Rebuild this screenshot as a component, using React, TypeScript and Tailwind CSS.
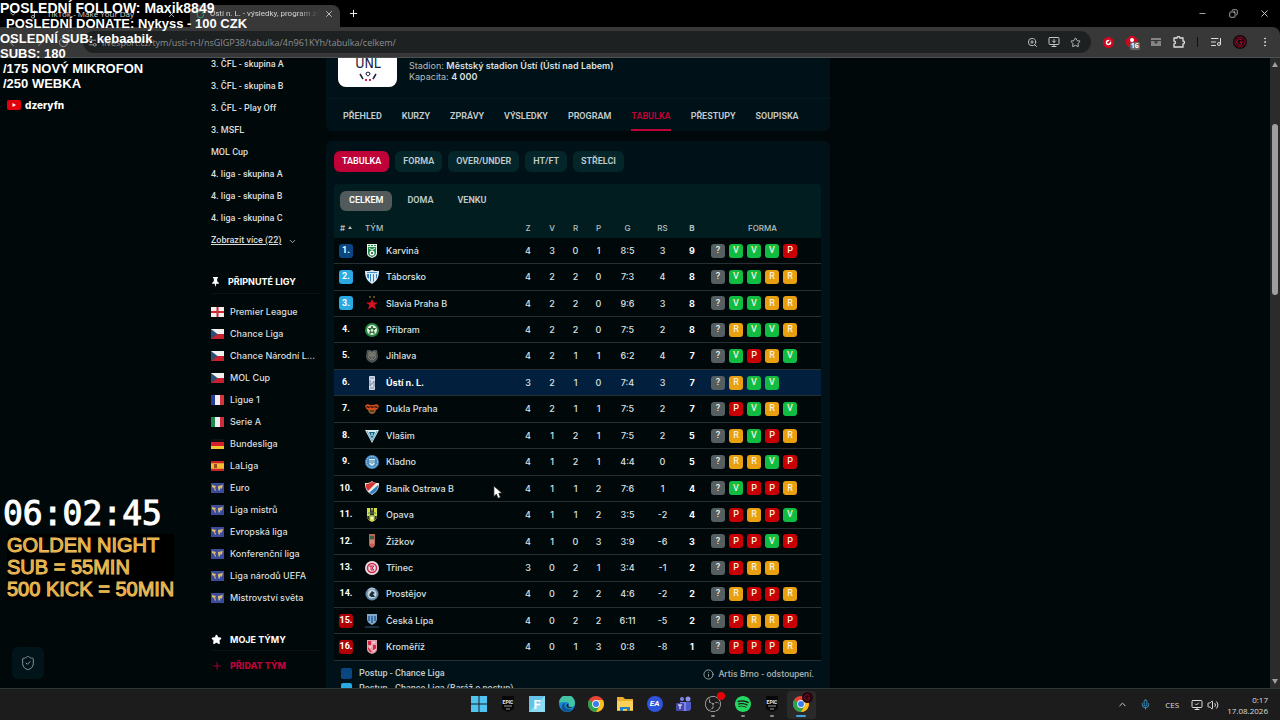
import { ReactNode } from "react";
import {
  ArrowLeft,
  ArrowRight,
  ChevronDown,
  ChevronUp,
  Copy,
  EllipsisVertical,
  Info,
  ListMusic,
  Mic,
  Minus,
  MonitorDown,
  MonitorCheck,
  Music2,
  Plus,
  RotateCw,
  Settings2,
  ShieldCheck,
  Star,
  Volume2,
  X,
  ZoomIn,
} from "lucide-react";
import { SiObsstudio, SiSpotify } from "react-icons/si";
import { clsx } from "clsx";

type FormResult = "?" | "V" | "R" | "P";

interface TeamRow {
  name: string;
  stats: string[];
  form: string;
}

const LEAGUES = [
  "3. ČFL - skupina A",
  "3. ČFL - skupina B",
  "3. ČFL - Play Off",
  "3. MSFL",
  "MOL Cup",
  "4. liga - skupina A",
  "4. liga - skupina B",
  "4. liga - skupina C",
];

const PINNED = [
  { name: "Premier League", flag: "eng" },
  { name: "Chance Liga", flag: "cze" },
  { name: "Chance Národní L...", flag: "cze" },
  { name: "MOL Cup", flag: "cze" },
  { name: "Ligue 1", flag: "fra" },
  { name: "Serie A", flag: "ita" },
  { name: "Bundesliga", flag: "ger" },
  { name: "LaLiga", flag: "esp" },
  { name: "Euro", flag: "world" },
  { name: "Liga mistrů", flag: "world" },
  { name: "Evropská liga", flag: "world" },
  { name: "Konferenční liga", flag: "world" },
  { name: "Liga národů UEFA", flag: "world" },
  { name: "Mistrovství světa", flag: "world" },
];

const NAV = [
  "PŘEHLED",
  "KURZY",
  "ZPRÁVY",
  "VÝSLEDKY",
  "PROGRAM",
  "TABULKA",
  "PŘESTUPY",
  "SOUPISKA",
];

const TABLE_TABS = ["TABULKA", "FORMA", "OVER/UNDER", "HT/FT", "STŘELCI"];

const TEAMS: TeamRow[] = [
  { name: "Karviná", stats: ["4", "3", "0", "1", "8:5", "3", "9"], form: "?VVVP" },
  { name: "Táborsko", stats: ["4", "2", "2", "0", "7:3", "4", "8"], form: "?VVRR" },
  { name: "Slavia Praha B", stats: ["4", "2", "2", "0", "9:6", "3", "8"], form: "?VVRR" },
  { name: "Příbram", stats: ["4", "2", "2", "0", "7:5", "2", "8"], form: "?RVVR" },
  { name: "Jihlava", stats: ["4", "2", "1", "1", "6:2", "4", "7"], form: "?VPRV" },
  { name: "Ústí n. L.", stats: ["3", "2", "1", "0", "7:4", "3", "7"], form: "?RVV" },
  { name: "Dukla Praha", stats: ["4", "2", "1", "1", "7:5", "2", "7"], form: "?PVRV" },
  { name: "Vlašim", stats: ["4", "1", "2", "1", "7:5", "2", "5"], form: "?RVPR" },
  { name: "Kladno", stats: ["4", "1", "2", "1", "4:4", "0", "5"], form: "?RRVP" },
  { name: "Baník Ostrava B", stats: ["4", "1", "1", "2", "7:6", "1", "4"], form: "?VPPR" },
  { name: "Opava", stats: ["4", "1", "1", "2", "3:5", "-2", "4"], form: "?PRPV" },
  { name: "Žižkov", stats: ["4", "1", "0", "3", "3:9", "-6", "3"], form: "?PPVP" },
  { name: "Třinec", stats: ["3", "0", "2", "1", "3:4", "-1", "2"], form: "?PRR" },
  { name: "Prostějov", stats: ["4", "0", "2", "2", "4:6", "-2", "2"], form: "?RPPR" },
  { name: "Česká Lípa", stats: ["4", "0", "2", "2", "6:11", "-5", "2"], form: "?PRRP" },
  { name: "Kroměříž", stats: ["4", "0", "1", "3", "0:8", "-8", "1"], form: "?PPPR" },
];

const FORM_COLORS: Record<FormResult, string> = {
  "?": "bg-[#555e61]",
  V: "bg-[#10bd42]",
  R: "bg-[#e8a010]",
  P: "bg-[#c80006]",
};

const rankColor = (rank: number) => {
  if (rank === 1) return "bg-[#0a4682]";
  if (rank <= 3) return "bg-[#2aa9e2]";
  if (rank >= 15) return "bg-[#b00005]";
  return "";
};

const CRESTS: Record<string, ReactNode> = {
  Karviná: (
    <>
      <path d="M2 0h10v9c0 3-2 4-5 5-3-1-5-2-5-5z" fill="#e4efe4" />
      <path d="M3 3h8v6c0 2-2 3-4 4-2-1-4-2-4-4z" fill="#238b4c" />
      <path d="M3 1h2v1H3zM6 1h2v1H6zM9 1h2v1H9z" fill="#238b4c" />
      <circle cx="7" cy="9" r="2.500" fill="#f4f4f4" />
      <path d="M4 4l3 2 3-2M7 8v2" stroke="#e5f2df" fill="none" />
      <circle cx="7" cy="9" r="1" fill="#164d2b" />
    </>
  ),
  Táborsko: (
    <>
      <path d="M0 1h4l3-1 3 1h4c0 6-2 10-7 13C2 11 0 7 0 1z" fill="#dbeaf5" />
      <path d="M2 4h2v5L2 7zM5 4h1v8L5 11zM8 4h1v7l-1 1zM11 4h1v3l-1 2z" fill="#2d83c5" />
      <path d="M2 2h10v1H2z" fill="#448fc8" />
    </>
  ),
  "Slavia Praha B": (
    <>
      <path d="M7 3l1.600 3.500H13L9.500 9l1.500 4.500-4-2.500-4 2.500L4.500 9 1 6.500h4.400z" fill="#dc1020" />
      <path d="M4 1h2M8 1h2" stroke="#a89131" strokeWidth="1" />
    </>
  ),
  Příbram: (
    <>
      <circle cx="7" cy="7" r="7" fill="#278848" />
      <circle cx="7" cy="7" r="5" fill="#e6f1dc" />
      <path d="M7 3l1 2.500h2.500L8.500 7.500l.8 3L7 9l-2.300 1.500.8-3-2-2H6z" fill="#27683b" stroke="#27683b" />
      <path d="M7 5.500l1.500 1.200-.5 2H6l-.5-2z" fill="#d8e5c5" />
    </>
  ),
  Jihlava: (
    <>
      <path d="M2 1h3l2 1 2-1h3l1 6c0 4-3 6-6 7-3-1-6-3-6-7z" fill="#4d5354" />
      <path d="M4 3h2v3H4zM8 3h2v3H8zM3 8l3 3M11 8l-3 3M7 4v7M3 7h8" stroke="#858575" fill="none" />
    </>
  ),
  "Ústí n. L.": (
    <>
      <rect x="4" y="0" width="6" height="14" rx="1" fill="#d5dce9" />
      <path d="M5 2h4M5 4v6l4-5v6M5 12h4" stroke="#7787a6" fill="none" />
    </>
  ),
  "Dukla Praha": (
    <>
      <path d="M0 4c1-2 4-2 5-1h4c1-1 4-1 5 1-1 3-2 4-4 4H4C2 8 1 7 0 4z" fill="#d54c1d" />
      <path d="M3 8h8c-1 3-2 4-4 4s-3-1-4-4z" fill="#8d642d" />
      <path d="M2 6V4l2 2V4M6 6V4l2 2V4M10 6V4l2 2V4M5 9h4" stroke="#39180d" fill="none" />
    </>
  ),
  Vlašim: (
    <>
      <path d="M0 1h14L7 14z" fill="#d8edf3" />
      <path d="M4 3h6l-3 7z" fill="#245970" />
      <path d="M2 2l5 10 5-10" stroke="#54a9c7" fill="none" />
      <path d="M6 4h2v3H6z" fill="#63c6e5" />
    </>
  ),
  Kladno: (
    <>
      <circle cx="7" cy="7" r="7" fill="#4388bf" />
      <circle cx="7" cy="7" r="5.500" fill="none" stroke="#c5e0f0" strokeDasharray="1 1" />
      <path d="M4 4h6v3c0 2-1 3-3 4-2-1-3-2-3-4z" fill="#d7e8ee" />
      <path d="M5 5v3M7 5v4M9 5v3" stroke="#357eae" />
    </>
  ),
  "Baník Ostrava B": (
    <>
      <path d="M0 2c3 0 5 0 7-2 2 2 4 2 7 2 0 6-2 9-7 12C2 11 0 8 0 2z" fill="#e9edf0" />
      <path d="M1 3c2 0 4-1 6-2l4 1-8 8C1 8 1 6 1 3z" fill="#d63632" />
      <path d="M13 4c0 5-2 7-6 9l-3-1z" fill="#2b80bf" />
    </>
  ),
  Opava: (
    <>
      <path d="M2 0h10v8c0 3-2 5-5 6-3-1-5-3-5-6z" fill="#d5dc4a" />
      <path d="M5 0h1l1 4 1-4h1v7H5zM2 8h2l1 4-2-1M12 8h-2l-1 4 2-1" fill="#24352a" />
      <path d="M3 5h8M4 8h6" stroke="#65805a" />
      <circle cx="7" cy="10" r="1.500" fill="#faf7d8" />
    </>
  ),
  Žižkov: (
    <>
      <path d="M4 0h6v10c0 2-1 3-3 4-2-1-3-2-3-4z" fill="#b7685b" />
      <path d="M5 2h4v3H5z" fill="#356446" />
      <path d="M5 7h4M5 9h4" stroke="#e5ae88" />
      <path d="M6 10h2v3" stroke="#d84957" fill="none" />
    </>
  ),
  Třinec: (
    <>
      <circle cx="7" cy="7" r="7" fill="#f1dfe3" />
      <circle cx="7" cy="7" r="4.500" fill="none" stroke="#ce294e" strokeWidth="1.500" />
      <path d="M4 5h5L7 7l2 2H6V5" stroke="#c21943" fill="none" />
    </>
  ),
  Prostějov: (
    <>
      <circle cx="7" cy="7" r="6.500" fill="#6289ae" />
      <circle cx="7" cy="7" r="4.500" fill="#c9d4d8" />
      <path d="M4 8l3-4 3 2-2 1 2 3H6L4 8z" fill="#192e3d" />
      <path d="M3 3l3-2 4 1" stroke="#c0d7e6" fill="none" />
    </>
  ),
  "Česká Lípa": (
    <>
      <path d="M2 0h10v5c0 3-2 4-5 6-3-2-5-3-5-6z" fill="#80a9ca" />
      <path d="M4 2v5M7 2v7M10 2v5" stroke="#285f99" strokeWidth="1.500" />
      <path d="M0 13h14" stroke="#345779" />
    </>
  ),
  Kroměříž: (
    <>
      <path d="M2 0h10v9c0 3-2 4-5 5-3-1-5-2-5-5z" fill="#e3a0aa" />
      <path d="M3 1h3v4H3zM8 5h3v5H8zM3 7l4 5H5L3 9z" fill="#d72744" />
      <path d="M7 3l3-1M7 6l-3 2M8 11l3-2" stroke="#fae8eb" />
    </>
  ),
};

const FLAGS: Record<string, ReactNode> = {
  eng: (
    <>
      <rect width="13" height="10" fill="#f4eeee" />
      <path d="M0 5h13M6.500 0v10" stroke="#d32735" strokeWidth="2" />
    </>
  ),
  cze: (
    <>
      <rect width="13" height="5" fill="#f1f1f1" />
      <rect y="5" width="13" height="5" fill="#c9202e" />
      <path d="M0 0l6.500 5L0 10z" fill="#275078" />
    </>
  ),
  fra: (
    <>
      <rect width="13" height="10" fill="#eeeeee" />
      <rect width="4" height="10" fill="#263a98" />
      <rect x="9" width="4" height="10" fill="#d8343e" />
    </>
  ),
  ita: (
    <>
      <rect width="13" height="10" fill="#eeeeee" />
      <rect width="4" height="10" fill="#178a4c" />
      <rect x="9" width="4" height="10" fill="#cc2c3c" />
    </>
  ),
  ger: (
    <>
      <rect width="13" height="3" fill="#111111" />
      <rect y="3" width="13" height="4" fill="#d3202a" />
      <rect y="7" width="13" height="3" fill="#f2c62f" />
    </>
  ),
  esp: (
    <>
      <rect width="13" height="10" fill="#f0bd2d" />
      <path d="M0 1h13M0 9h13" stroke="#c9232c" strokeWidth="2.500" />
      <rect x="3" y="3" width="3" height="4" fill="#9b4c26" />
    </>
  ),
  world: (
    <>
      <rect width="13" height="10" fill="#3d4b9b" />
      <path d="M1 2l4 1-1 2 1 2-1 1-1-3-2-1zM7 3l5-1-1 3-1 1-1-1v2L8 8 7 5z" fill="#d8b873" />
    </>
  ),
};

const ChromeLogo = () => (
  <svg viewBox="0 0 16 16" className="size-4" aria-hidden="true">
    <circle cx="8" cy="8" r="8" fill="#e7453a" />
    <path d="M8 8L1.070 4A8 8 0 0 0 8 16l3.500-6z" fill="#2ba24c" />
    <path d="M8 16a8 8 0 0 0 6.900-12H8l3.500 6z" fill="#fbc116" />
    <circle cx="8" cy="8" r="3.900" fill="#f5f5f5" />
    <circle cx="8" cy="8" r="3" fill="#3b7ded" />
  </svg>
);

const EpicLogo = () => (
  <svg viewBox="0 0 14 16" className="h-4 w-[14px]" aria-hidden="true">
    <path d="M1 0h12v13l-6 3-6-3z" fill="#070707" />
    <text
      x="7"
      y="8"
      textAnchor="middle"
      fontSize="5"
      fontWeight="700"
      fill="#eeeeee"
      className="font-['Roboto',sans-serif]"
    >
      EPIC
    </text>
    <path d="M3 10h8M5 13h4" stroke="#9b9b9b" />
  </svg>
);

const BrowserHeader = () => (
  <header className="shrink-0 font-['Open_Sans',sans-serif] text-[#d5d5d5]">
    <div className="flex h-[27px] items-end bg-black text-[8px]">
      <div className="flex h-[22px] w-[190px] items-center gap-2 pr-[14px] pb-1 pl-2">
        <ChevronDown className="mr-1 size-[10px]" />
        <Music2 className="size-[9px]" />
        <span className="flex-1 whitespace-nowrap">TikTok - Make Your Day</span>
        <X className="size-[9px]" />
      </div>
      <div className="flex h-[22px] w-[150px] items-center gap-[5px] rounded-t-lg bg-[#383838] px-[6px] pb-1">
        <RotateCw className="size-[9px] shrink-0 text-[#30b08d]" />
        <span className="min-w-0 flex-1 mask-r-from-80% font-['Roboto',sans-serif] whitespace-nowrap">
          Ústí n. L. - výsledky, program zá
        </span>
        <X className="size-[10px] shrink-0" />
      </div>
      <button type="button" aria-label="Nová karta" className="mb-2 ml-2">
        <Plus className="size-[11px] text-white" />
      </button>
      <div className="mb-2 ml-auto flex w-[82px] items-center justify-between pr-[10px]">
        <button type="button" aria-label="Minimalizovat">
          <Minus className="size-[9px]" />
        </button>
        <button type="button" aria-label="Obnovit">
          <Copy className="size-[9px] -scale-x-100" />
        </button>
        <button type="button" aria-label="Zavřít">
          <X className="size-[11px]" />
        </button>
      </div>
    </div>
    <div className="flex h-[31px] items-center rounded-tr-lg border-b border-[#4b5052] bg-[#383838]">
      <div className="flex w-[83px] items-center gap-[14px] pl-2 text-[#9a9a9a]">
        <ArrowLeft className="size-[11px]" />
        <ArrowRight className="size-[11px]" />
        <RotateCw className="size-[11px]" />
      </div>
      <div className="flex h-[22px] flex-1 items-center rounded-full bg-[#1e2122] px-1">
        <Settings2 className="mr-1 size-[11px] text-[#9a9a9a]" />
        <input
          type="text"
          aria-label="Adresa"
          readOnly
          className="h-4 flex-1 text-[9px] text-[#8b8e8f] outline-none"
          value="livesport.cz/tym/usti-n-l/nsGIGP38/tabulka/4n961KYh/tabulka/celkem/"
        />
        <div className="flex items-center gap-[10px] pr-[6px] text-[#c6c6c6]">
          <ZoomIn className="size-[11px]" />
          <MonitorDown className="size-3" />
          <Star className="size-[11px]" />
        </div>
      </div>
      <div className="flex w-[189px] items-center justify-between pr-[9px] pl-3">
        <svg viewBox="0 0 12 12" className="size-[11px]">
          <circle cx="6" cy="6" r="6" fill="#d00620" />
          <circle cx="6" cy="6" r="3" fill="#ffffff" />
          <path d="M5 7l3-3" stroke="#d00620" strokeWidth="2" />
        </svg>
        <span className="relative pr-[2px]">
          <svg viewBox="0 0 12 12" className="size-3">
            <path d="M4 0h4l4 4v4l-4 4H4L0 8V4z" fill="#d00620" />
            <circle cx="6" cy="4" r="2" fill="#ffffff" />
          </svg>
          <span className="absolute top-[6px] left-1 rounded-xs bg-[#666666] px-px text-[7px] leading-[8px] font-bold text-white">
            16
          </span>
        </span>
        <svg viewBox="0 0 10 10" className="size-[10px]">
          <path d="M0 1h10v2H0zM0 4h10v5H0z" fill="#858585" />
          <path d="M3 5h4M5 4v3" stroke="#333333" />
        </svg>
        <svg viewBox="0 0 12 12" className="size-3" fill="none" stroke="#dddddd" strokeWidth="1.300">
          <path d="M1 2h3a1.500 1.500 0 0 1 3 0h3v3a1.500 1.500 0 0 1 0 3v3H1V8a1.500 1.500 0 0 0 0-3z" />
        </svg>
        <span className="h-[10px] w-px bg-[#111111]" />
        <ListMusic className="size-3 text-[#dddddd]" />
        <svg viewBox="0 0 14 14" className="size-[14px]" fill="none">
          <circle cx="7" cy="7" r="7" fill="#19060a" />
          <circle cx="7" cy="7" r="5" stroke="#8d0c2b" />
          <path d="M9 5a3 3 0 1 0 0 4l-2-2h3" stroke="#b20e38" />
        </svg>
        <EllipsisVertical className="size-3 text-[#dddddd]" />
      </div>
    </div>
  </header>
);

const Sidebar = () => (
  <aside className="w-[123px] shrink-0 pr-[6px] pl-2 text-[9px] font-medium text-[#d9dddd]">
    <ul className="-mt-1 font-['Roboto',sans-serif]">
      {LEAGUES.map((league) => (
        <li key={league} className="flex h-[22px] items-center">
          <a href="#" className="whitespace-nowrap">
            {league}
          </a>
        </li>
      ))}
    </ul>
    <button
      type="button"
      className="flex h-[22px] items-center gap-[6px] font-['Roboto',sans-serif] whitespace-nowrap underline"
    >
      Zobrazit více (22)
      <ChevronDown className="size-[9px]" />
    </button>

    <h2 className="mt-[19px] flex h-[23px] items-center gap-2 border-b border-[#071316] font-bold whitespace-nowrap text-white">
      <svg viewBox="0 0 10 12" className="h-[10px] w-[9px]" fill="currentColor">
        <path d="M2 0h6v1L7 2v3l2 2v1H6l-1 4-1-4H1V7l2-2V2L2 1z" />
      </svg>
      PŘIPNUTÉ LIGY
    </h2>
    <ul className="mt-[7px]">
      {PINNED.map(({ name, flag }) => (
        <li key={name}>
          <a href="#" className="flex h-[22px] items-center gap-[6px] whitespace-nowrap">
            <svg viewBox="0 0 13 10" className="h-[10px] w-[13px] shrink-0">
              {FLAGS[flag]}
            </svg>
            {name}
          </a>
        </li>
      ))}
    </ul>

    <h2 className="mt-5 flex h-[22px] items-center gap-2 border-b border-[#071316] font-bold whitespace-nowrap text-white">
      <Star className="size-[11px] fill-current" />
      MOJE TÝMY
    </h2>
    <button
      type="button"
      className="mt-1 flex h-[22px] items-center gap-[7px] font-extrabold whitespace-nowrap text-[#c00038]"
    >
      <Plus className="size-3" strokeWidth={1.5} />
      PŘIDAT TÝM
    </button>
  </aside>
);

const TeamHeader = () => (
  <section className="rounded-b-md bg-[#001217]">
    <div className="flex h-10 gap-3 pl-3">
      <div className="flex h-[29px] w-[59px] justify-center rounded-b-lg bg-white">
        <svg viewBox="0 0 26 29" className="h-[29px] w-[26px]">
          <text
            x="13"
            y="10"
            textAnchor="middle"
            fontSize="14"
            fill="#1a2142"
            className="font-['DejaVu_Sans_Condensed','Roboto',sans-serif]"
          >
            ÚNL
          </text>
          <path d="M5 16l3 5M21 16l-3 5" stroke="#1a2142" strokeWidth="1.500" />
          <path d="M10 22h2M14 22h2" stroke="#d3234c" strokeWidth="2" />
          <path d="M11 15l2-1 2 1-.5 2-1.500 1-1.500-1z" stroke="#1a2142" fill="none" />
        </svg>
      </div>
      <div className="pt-[2px] text-[9px] leading-[11px] text-[#b4bcbd]">
        <p>
          Stadion: <b className="font-semibold text-[#dbe0e0]">Městský stadion Ústí (Ústí nad Labem)</b>
        </p>
        <p>
          Kapacita: <b className="font-semibold text-[#dbe0e0]">4 000</b>
        </p>
      </div>
    </div>
    <nav className="flex gap-5 border-t border-[#021a20] px-[17px] font-['Roboto',sans-serif] text-[9px] font-semibold text-[#c5cccd]">
      {NAV.map((item) => (
        <a
          key={item}
          href="#"
          className={clsx(
            "flex h-8 items-center border-b-2 pt-[6px]",
            item === "TABULKA" ? "border-[#c00038] text-[#c00038]" : "border-transparent",
          )}
        >
          {item}
        </a>
      ))}
    </nav>
  </section>
);

const Standings = () => (
  <section className="mt-[10px] flex-1 rounded-t-md bg-[#001217] pt-[10px] pr-[9px] pl-2">
    <div className="flex gap-[6px] font-['Roboto',sans-serif] text-[9px] font-semibold">
      {TABLE_TABS.map((tab) => (
        <button
          key={tab}
          type="button"
          className={clsx(
            "h-[21px] rounded-md px-2",
            tab === "TABULKA" ? "bg-[#c00038] text-white" : "bg-[#04262b] text-[#c0cccd]",
          )}
        >
          {tab}
        </button>
      ))}
    </div>

    <div className="mt-3 rounded-t-sm bg-[#021d20]">
      <div className="flex h-[33px] items-center gap-[6px] pl-[6px] font-['Roboto',sans-serif] text-[9px] font-semibold text-[#c0cccd]">
        <button type="button" className="h-5 rounded-md bg-[#535a5c] px-[9px] text-white">
          CELKEM
        </button>
        <button type="button" className="h-5 px-[9px]">
          DOMA
        </button>
        <button type="button" className="h-5 px-[9px]">
          VENKU
        </button>
      </div>
      <table className="h-[444px] w-full table-fixed text-center text-[9px] text-[#dce1e1]">
        <colgroup>
          <col className="w-6" />
          <col />
          <col className="w-6" />
          <col className="w-6" />
          <col className="w-[23px]" />
          <col className="w-[23px]" />
          <col className="w-[35px]" />
          <col className="w-[35px]" />
          <col className="w-6" />
          <col className="w-[117px]" />
        </colgroup>
        <thead>
          <tr className="h-[21px] text-[8px] text-[#b5c0c1]">
            <th className="font-semibold">
              <span className="flex items-center justify-center gap-[3px]">
                #
                <svg viewBox="0 0 4 3" className="h-[3px] w-1" fill="currentColor">
                  <path d="M2 0l2 3H0z" />
                </svg>
              </span>
            </th>
            <th className="pl-[7px] text-left font-medium">TÝM</th>
            {["Z", "V", "R", "P", "G", "RS"].map((label) => (
              <th key={label} className="font-medium">
                {label}
              </th>
            ))}
            <th className="font-bold">B</th>
            <th className="font-medium">FORMA</th>
          </tr>
        </thead>
        <tbody>
          {TEAMS.map(({ name, stats, form }, index) => {
            const active = name === "Ústí n. L.";
            return (
              <tr
                key={name}
                className={clsx(
                  "border-b border-[#263032]",
                  active ? "bg-[#02203d]" : "bg-[#00080a]",
                )}
              >
                <td>
                  <span
                    className={clsx(
                      "mx-auto flex size-[14px] items-center justify-center rounded-[3px] font-['Roboto',sans-serif] font-bold text-white",
                      rankColor(index + 1),
                    )}
                  >
                    {index + 1}.
                  </span>
                </td>
                <td className="pl-[7px]">
                  <a
                    href="#"
                    className={clsx(
                      "flex items-center gap-[7px] whitespace-nowrap",
                      active ? "font-bold text-white" : "font-medium",
                    )}
                  >
                    <svg viewBox="0 0 14 14" className="size-[14px] shrink-0">
                      {CRESTS[name]}
                    </svg>
                    {name}
                  </a>
                </td>
                {stats.map((value, column) => (
                  <td key={column} className={column === 6 ? "font-bold text-white" : "font-medium"}>
                    {value}
                  </td>
                ))}
                <td>
                  <div className="flex gap-1 pl-[7px]">
                    {form.split("").map((result, position) => (
                      <span
                        key={position}
                        className={clsx(
                          "flex size-[14px] items-center justify-center rounded-[3px] font-['Roboto',sans-serif] font-medium text-[#f6efdf]",
                          FORM_COLORS[result as FormResult],
                        )}
                      >
                        {result}
                      </span>
                    ))}
                  </div>
                </td>
              </tr>
            );
          })}
        </tbody>
      </table>
    </div>

    <div className="flex justify-between pt-[5px] pr-[7px] pl-[7px] font-['Roboto',sans-serif] text-[9px] leading-[15px] font-medium text-[#c3cbcc]">
      <ul>
        <li className="flex items-center gap-[7px]">
          <span className="size-[11px] rounded-xs bg-[#0a4682]" />
          Postup - Chance Liga
        </li>
        <li className="flex items-center gap-[7px]">
          <span className="size-[11px] rounded-xs bg-[#2aa9e2]" />
          Postup - Chance Liga (Baráž o postup)
        </li>
      </ul>
      <p className="flex h-[17px] items-center gap-1 text-[#9fabac]">
        <Info className="size-[11px]" />
        Artis Brno - odstoupení.
      </p>
    </div>
  </section>
);

const Scrollbar = () => (
  <div className="flex w-[10px] shrink-0 flex-col items-center justify-between bg-[#2b2b2b] py-1 text-[#9f9f9f]">
    <svg viewBox="0 0 6 5" className="h-[5px] w-[6px]" fill="currentColor">
      <path d="M3 0l3 5H0z" />
    </svg>
    <div className="flex w-[6px] flex-1 flex-col pt-[57px]">
      <span className="h-[171px] rounded-full bg-[#9f9f9f]" />
    </div>
    <svg viewBox="0 0 6 5" className="h-[5px] w-[6px]" fill="currentColor">
      <path d="M3 5l3-5H0z" />
    </svg>
  </div>
);

const StreamOverlay = () => (
  <>
    <div className="absolute top-0 left-0 font-['Liberation_Sans',Arial,sans-serif] text-[13px] leading-[15px] font-bold whitespace-pre text-white">
      <p className="text-sm leading-[16px]">POSLEDNÍ FOLLOW: Maxik8849</p>
      <p className="pl-[6px]">POSLEDNÍ DONATE: Nykyss - 100 CZK</p>
      <p>OSLEDNÍ SUB: kebaabik</p>
      <p>SUBS: 180</p>
      <p className="pl-[3px]">/175 NOVÝ MIKROFON</p>
      <p className="pl-[3px]">/250 WEBKA</p>
    </div>
    <div className="absolute top-[98px] left-[7px] flex items-center gap-1 text-[10px] leading-[14px] font-extrabold text-white">
      <svg viewBox="0 0 14 10" className="h-[10px] w-[14px]">
        <rect width="14" height="10" rx="2" fill="#e1000b" />
        <path d="M5.500 3v4L9 5z" fill="#ffffff" />
      </svg>
      dzeryfn
    </div>
    <div className="absolute top-[494px] left-[3px] font-['DejaVu_Sans_Mono',monospace] text-[33px] leading-[40px] text-white [-webkit-text-stroke:1px_#ffffff]">
      06:02:45
    </div>
    <div className="absolute top-[534px] left-[7px] bg-black font-['Liberation_Sans',Arial,sans-serif] text-xl leading-[22px] text-[#e29a25] [-webkit-text-stroke:1px_#ecc060]">
      <p>GOLDEN NIGHT</p>
      <p>SUB = 55MIN</p>
      <p>500 KICK = 50MIN</p>
    </div>
    <svg viewBox="0 0 12 18" className="absolute top-[485px] left-[493px] h-[15px] w-[10px]">
      <path d="M1 1v13l3-3 2 5 3-1-2-5h4z" fill="#ffffff" stroke="#111111" />
    </svg>
  </>
);

const TASKS = [
  {
    label: "Start",
    icon: (
      <svg viewBox="0 0 16 16" className="size-4">
        <path d="M0 0h7.500v7.500H0zM8.500 0H16v7.500H8.500zM0 8.500h7.500V16H0zM8.500 8.500H16V16H8.500z" fill="#50c3f0" />
      </svg>
    ),
  },
  { label: "Epic Games", icon: <EpicLogo /> },
  {
    label: "Fortnite",
    icon: (
      <svg viewBox="0 0 16 16" className="size-4">
        <rect width="16" height="16" fill="#62c4e8" />
        <path d="M0 16L16 0v16z" fill="#8bdcf2" />
        <text
          x="8"
          y="13"
          textAnchor="middle"
          fontSize="13"
          fontWeight="700"
          fill="#ffffff"
          className="font-['Roboto',sans-serif]"
        >
          F
        </text>
      </svg>
    ),
  },
  {
    label: "Edge",
    icon: (
      <svg viewBox="0 0 16 16" className="size-4">
        <circle cx="8" cy="8" r="8" fill="#1687cf" />
        <path d="M0 7a8 8 0 0 1 16 0c0 3-2 4.500-5 4-1.500-.3-2-1-1-2 .7-1-.2-3-2.500-3C4 6 1 6 0 7z" fill="#43c5a5" />
        <path d="M6 7c-2 4 1 7 7 6-3 4-9 3-10 0S4 7 6 7z" fill="#10558f" />
        <path d="M9.500 9c-1 1.500 1 2.600 4 1.700-2 2-6 1.300-6-1 0-1 .7-2 1.500-2z" fill="#1c1c1c" />
      </svg>
    ),
  },
  { label: "Chrome", icon: <ChromeLogo /> },
  {
    label: "Průzkumník",
    icon: (
      <svg viewBox="0 0 16 16" className="size-4">
        <path d="M0 1h6l2 2h8v12H0z" fill="#e8ae2c" />
        <path d="M0 5h16v9H0z" fill="#fbd15a" />
        <path d="M3 15v-4h10v4h-3v-2H6v2z" fill="#2382c4" />
      </svg>
    ),
  },
  {
    label: "EA",
    icon: (
      <span className="flex size-4 items-center justify-center rounded-full bg-[#2e54db] font-['Roboto',sans-serif] text-[8px] font-bold text-white italic">
        EA
      </span>
    ),
  },
  {
    label: "Teams",
    icon: (
      <svg viewBox="0 0 16 16" className="size-4">
        <circle cx="6" cy="3" r="2" fill="#7b83eb" />
        <circle cx="12" cy="3" r="2.500" fill="#8b91ee" />
        <path d="M4 6h7v9H6c-2 0-3-2-3-4z" fill="#7b83eb" />
        <path d="M10 6h5v6c0 2-1 3-3 3h-2z" fill="#5059c9" />
        <rect y="7" width="8" height="8" rx="1" fill="#4648a8" />
        <path d="M2 9h4M4 9v4" stroke="#ffffff" />
      </svg>
    ),
  },
  {
    label: "OBS",
    running: true,
    icon: (
      <span className="relative">
        <SiObsstudio className="size-4 text-[#b9b9b9]" />
        <span className="absolute -top-1 -right-1 size-2 rounded-full bg-[#e80008]" />
      </span>
    ),
  },
  { label: "Spotify", running: true, icon: <SiSpotify className="size-4 text-[#24d760]" /> },
  { label: "Epic Games", running: true, icon: <EpicLogo /> },
  {
    label: "Chrome",
    running: true,
    active: true,
    icon: (
      <span className="relative">
        <ChromeLogo />
        <svg viewBox="0 0 12 12" className="absolute -top-1 -right-1 size-[11px]" fill="none">
          <circle cx="6" cy="6" r="6" fill="#26050c" />
          <path d="M8 4a3 3 0 1 0 0 4V6H6" stroke="#8d102c" />
        </svg>
      </span>
    ),
  },
];

const Taskbar = () => (
  <footer className="grid h-8 shrink-0 grid-cols-[1fr_auto_1fr] items-center border-t border-[#2e3638] bg-[#1c1c1c] font-['Open_Sans',sans-serif] text-[8px] text-[#dcdcdc]">
    <span />
    <div className="grid w-[352px] grid-cols-12">
      {TASKS.map(({ label, icon, running, active }, index) => (
        <button
          key={index}
          type="button"
          aria-label={label}
          className={clsx(
            "flex h-7 flex-col items-center justify-end gap-[3px] rounded-sm pb-[2px]",
            active && "bg-[#2a2a2a]",
          )}
        >
          {icon}
          <span
            className={clsx(
              "h-[2px] rounded-full",
              active ? "w-[10px] bg-[#3fa4dc]" : "w-1",
              running && !active && "bg-[#8a8a8a]",
            )}
          />
        </button>
      ))}
    </div>
    <div className="flex items-center justify-end pr-3">
      <ChevronUp className="mr-3 size-[11px]" />
      <Mic className="mr-[14px] size-[11px] text-[#3b9fd7]" />
      <span className="mr-3">CES</span>
      <MonitorCheck className="mr-1 size-3" />
      <Volume2 className="mr-2 size-3" />
      <time className="text-right leading-[11px]">
        0:17
        <br />
        17.08.2026
      </time>
    </div>
  </footer>
);

const App = () => (
  <div className="relative flex h-screen flex-col overflow-hidden bg-[#000809] font-['Inter',sans-serif]">
    <BrowserHeader />
    <div className="flex min-h-0 flex-1">
      <div className="min-w-0 flex-1 overflow-hidden">
        <div className="mx-auto flex w-full max-w-[864px]">
          <Sidebar />
          <main className="flex w-[504px] shrink-0 flex-col">
            <TeamHeader />
            <Standings />
          </main>
        </div>
      </div>
      <Scrollbar />
    </div>
    <Taskbar />
    <StreamOverlay />
    <button
      type="button"
      aria-label="Soukromí"
      className="absolute bottom-[41px] left-3 flex size-8 items-center justify-center rounded-md bg-[#001419] text-[#8b9698]"
    >
      <ShieldCheck className="size-4" strokeWidth={1.5} />
    </button>
  </div>
);

export default App;
